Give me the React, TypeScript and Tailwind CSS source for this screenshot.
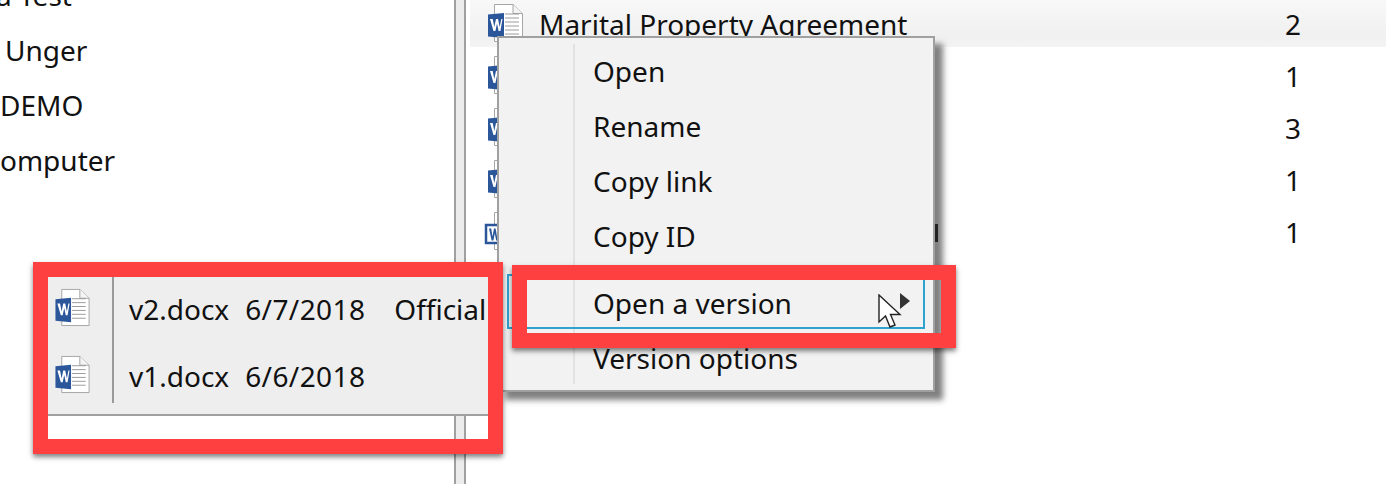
const font = "font-['Noto_Sans','Open_Sans',sans-serif]";

function WordIcon({ className }: { className?: string }) {
  return (
    <svg viewBox="0 0 36 40" className={className}>
      <path d="M6.5 1.5H25L34.5 10.5V38.5H6.5Z" fill="#fff" stroke="#a6a6a6" />
      <path d="M25 1.5V10.5H34.5" fill="#f4f4f4" stroke="#a6a6a6" />
      <path d="M17 11H31M17 15H31M17 19H31M17 23H31M17 27H31M17 31H31" stroke="#9a9a9a" strokeWidth="1" />
      <path d="M0 11.5L16 10V35L0 33.5Z" fill="#2b579a" />
      <path d="M2.5 14H5.2L6.8 22L8.5 14H10.5L12.2 22L13.8 14H15L12.9 26H11.1L9.5 18.5L7.9 26H6Z" fill="#fff" transform="translate(-0.5 2)" />
    </svg>
  );
}

function OutlineWordIcon({ className }: { className?: string }) {
  return (
    <svg viewBox="0 0 36 40" className={`overflow-visible ${className ?? ""}`}>
      <path d="M6.5 1.5H34.5V38.5H6.5Z" fill="#fff" stroke="#a6a6a6" />
      <rect x="-2" y="14" width="16" height="18" fill="#fff" stroke="#2b579a" strokeWidth="2.5" />
      <path d="M1 17.5H3.2L4.5 25.5L6 17.5H7.6L9 25.5L10.2 17.5H11.5L9.8 29.5H8.2L6.8 22.5L5.4 29.5H3.6Z" fill="#2b579a" />
    </svg>
  );
}

const leftRows = [
  { text: "a Test", cls: "h-[55px] -ml-[4px]" },
  { text: "Unger", cls: "h-[55px] pl-[5px]" },
  { text: "DEMO", cls: "h-[55px] pl-0" },
  { text: "omputer", cls: "h-[55px] pl-0" },
];

const rightRows = [
  { name: "Marital Property Agreement", n: "2", icon: WordIcon, cls: "h-[47px] mb-[5px] bg-gradient-to-b from-[#f8f8f8] via-[#f0f0f0] via-80% to-[#f4f4f4]" },
  { name: "", n: "1", icon: WordIcon, cls: "h-[47px] mb-[5px]" },
  { name: "", n: "3", icon: WordIcon, cls: "h-[47px] mb-[5px]" },
  { name: "", n: "1", icon: WordIcon, cls: "h-[47px] mb-[5px]" },
  { name: "", n: "1", icon: OutlineWordIcon, cls: "h-[47px] mb-[5px]" },
];

const menuItems = [
  { label: "Open", cls: "h-[55px]" },
  { label: "Rename", cls: "h-[55px]" },
  { label: "Copy link", cls: "h-[55px]" },
  { label: "Copy ID", cls: "h-[55px]" },
];

export default function App() {
  return (
    <div className={`relative w-[1386px] h-[484px] overflow-hidden bg-white text-[#111] text-[28px] ${font}`}>
      <div className="flex h-full">
        <div className="w-[454px] shrink-0 -mt-[38px] pt-[5px]">
          {leftRows.map((r) => (
            <div key={r.text} className={`flex items-center leading-none ${r.cls}`}>{r.text}</div>
          ))}
        </div>
        <div className="w-[12px] shrink-0 bg-[#ececec] border-x-2 border-[#a0a0a0]" />
        <div className="flex-1 pl-[4px]">
          {rightRows.map((r, i) => {
            const Icon = r.icon;
            return (
              <div key={i} className={`flex items-center pl-[18px] ${r.cls}`}>
                <Icon className="w-[36px] h-[40px] shrink-0 -mt-[1px]" />
                <span className="ml-[15px] w-[746px] whitespace-nowrap leading-none">{r.name}</span>
                <span className="leading-none">{r.n}</span>
              </div>
            );
          })}
        </div>
      </div>

      {/* Context menu */}
      <div className="absolute left-[497px] top-[36px] w-[438px] h-[356px] bg-[#f2f2f2] border-2 border-[#a0a0a0] shadow-[8px_8px_6px_rgba(0,0,0,0.5)] flex">
        <div className="w-[76px] shrink-0 my-[6px] border-r-2 border-[#e2e2e2]" />
        <div className="flex-1 pl-[18px] pt-[5px]">
          {menuItems.map((m) => (
            <div key={m.label} className={`flex items-center leading-none ${m.cls}`}>{m.label}</div>
          ))}
          <div className="h-[12px]" />
          <div className="flex items-center h-[55px] leading-none">Open a version</div>
          <div className="flex items-center h-[55px] leading-none">Version options</div>
        </div>
      </div>

      {/* Right-hand end of the text that runs past the menu */}
      <div className="absolute left-[935px] top-[224px] w-[3px] h-[18px] bg-[#222]" />

      {/* Hovered item outline */}
      <div className="absolute left-[507px] top-[274px] w-[418px] h-[55px] border-2 border-[#2ea3d0]" />
      <div className="absolute left-[900px] top-[293px] w-0 h-0 border-y-[8px] border-y-transparent border-l-[10px] border-l-[#333]" />

      {/* Pointer */}
      <svg viewBox="0 0 28 40" className="absolute left-[877px] top-[294px] w-[28px] h-[40px]">
        <path d="M2 1V28L8.5 22L13 33L18 31L13.5 20.5H23Z" fill="#fff" stroke="#222" strokeWidth="1.4" />
      </svg>

      {/* Submenu */}
      <div className="absolute left-[48px] top-[277px] w-[441px] h-[139px] bg-[#eeeeee] border-b-2 border-[#a0a0a0] flex">
        <div className="w-[66px] shrink-0 flex flex-col pl-[7px] pt-[11px] gap-[28px] border-r-2 border-[#9a9a9a] mb-[11px]">
          <WordIcon className="w-[36px] h-[39px] shrink-0" />
          <WordIcon className="w-[36px] h-[39px] shrink-0" />
        </div>
        <div className="pl-[15px] pt-[7px] whitespace-nowrap">
          <div className="flex items-center h-[50px] leading-none">
            <span>v2.docx</span>
            <span className="ml-[16px] tracking-[0.4px]">6/7/2018</span>
            <span className="ml-[29px]">Official</span>
          </div>
          <div className="flex items-center h-[67px] leading-none pt-[17px]">
            <span>v1.docx</span>
            <span className="ml-[16px] tracking-[0.4px]">6/6/2018</span>
          </div>
        </div>
      </div>

      {/* Red callouts */}
      <div className="absolute left-[33px] top-[262px] w-[470px] h-[192px] border-[15px] border-[#ff4040] shadow-[0_3px_5px_rgba(0,0,0,0.5)]" />
      <div className="absolute left-[512px] top-[265px] w-[444px] h-[83px] border-[15px] border-[#ff4040] shadow-[0_3px_5px_rgba(0,0,0,0.5)]" />
    </div>
  );
}
